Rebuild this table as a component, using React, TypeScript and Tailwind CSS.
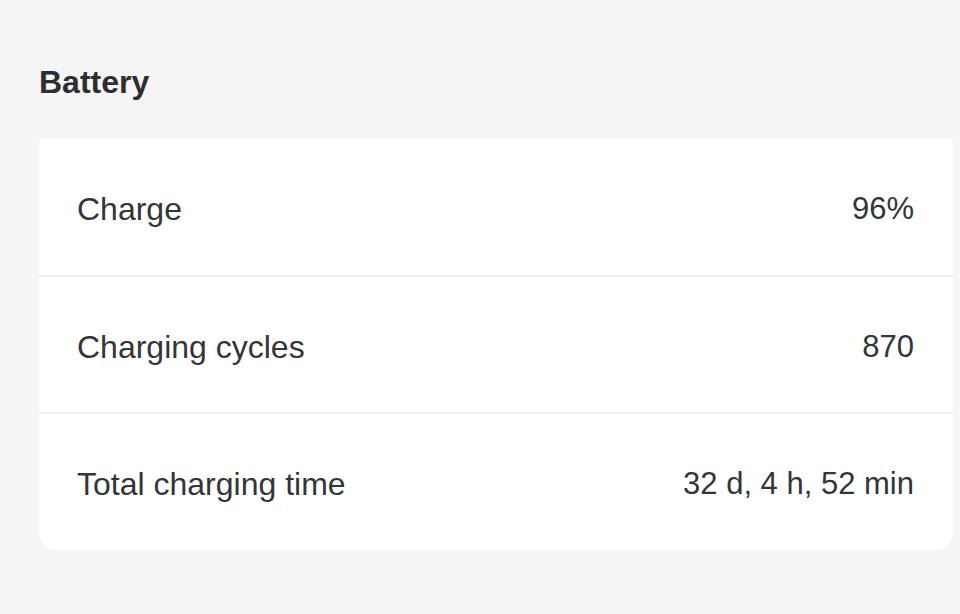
import React from "react";

const rows = [
  { label: "Charge", value: "96%", h: "h-[138px]" },
  { label: "Charging cycles", value: "870", h: "h-[137px]" },
  { label: "Total charging time", value: "32 d, 4 h, 52 min", h: "h-[136px]" },
];

export default function App() {
  return (
    <div
      className="min-h-screen w-full bg-[#f5f5f5] pl-[39px] pr-[7px] pt-[62px]"
      style={{ fontFamily: '"Liberation Sans", Arial, sans-serif' }}
    >
      <h1 className="text-[32px] leading-[40px] font-bold text-[#2c2e31]">Battery</h1>
      <div className="mt-[37px] bg-white rounded-b-[18px] flex flex-col">
        {rows.map((r, i) => (
          <div
            key={r.label}
            className={`${r.h} flex items-center justify-between pt-[4px] pl-[38px] pr-[39px] text-[#333538] ${
              i < rows.length - 1 ? "border-b-2 border-[#efefef]" : ""
            }`}
          >
            <span className="text-[32px] leading-[40px]">{r.label}</span>
            <span className="text-[31px] leading-[40px]">{r.value}</span>
          </div>
        ))}
      </div>
    </div>
  );
}
